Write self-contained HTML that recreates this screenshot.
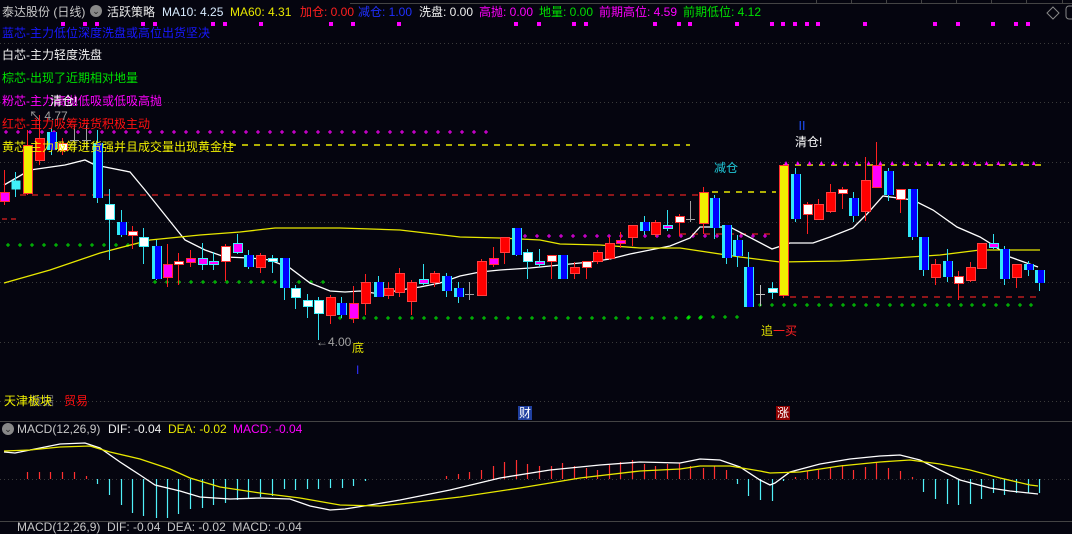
<!DOCTYPE html>
<html><head><meta charset="utf-8">
<style>
html,body{margin:0;padding:0;background:#05050f;}
body{width:1072px;height:527px;overflow:hidden;position:relative;font-family:"Liberation Sans","Noto Sans CJK SC",sans-serif;font-size:12px;}
.t{position:absolute;white-space:nowrap;line-height:14px;}
svg{position:absolute;left:0;top:0;}
</style></head><body>
<svg id="s" width="1072" height="527" xmlns="http://www.w3.org/2000/svg"></svg>

<div class="t" style="left:2px;top:5px;color:#c8c8c8">泰达股份 (日线)</div>
<div class="t" style="left:90px;top:5px;width:12px;height:12px;border-radius:6px;background:#888;color:#222;font-size:9px;text-align:center;line-height:12px">⌄</div>
<div class="t" style="left:107px;top:5px;color:#e8e8e8">活跃策略</div>
<div class="t" style="left:162px;top:5px;color:#d8ecff">MA10: 4.25</div>
<div class="t" style="left:230px;top:5px;color:#e8e800">MA60: 4.31</div>
<div class="t" style="left:300px;top:5px;color:#ff2020">加仓: 0.00</div>
<div class="t" style="left:358px;top:5px;color:#2030ff">减仓: 1.00</div>
<div class="t" style="left:419px;top:5px;color:#f0f0f0">洗盘: 0.00</div>
<div class="t" style="left:479px;top:5px;color:#ff00ff">高抛: 0.00</div>
<div class="t" style="left:539px;top:5px;color:#00e000">地量: 0.00</div>
<div class="t" style="left:599px;top:5px;color:#ff00ff">前期高位: 4.59</div>
<div class="t" style="left:683px;top:5px;color:#00e000">前期低位: 4.12</div>

<div class="t" style="left:2px;top:26px;color:#1818ff">蓝芯-主力低位深度洗盘或高位出货坚决</div>
<div class="t" style="left:2px;top:48px;color:#f0f0f0">白芯-主力轻度洗盘</div>
<div class="t" style="left:2px;top:71px;color:#00e000">棕芯-出现了近期相对地量</div>
<div class="t" style="left:2px;top:94px;color:#ff00ff">粉芯-主力高抛低吸或低吸高抛</div>
<div class="t" style="left:50px;top:94px;color:#ffffff">清仓!</div>
<div class="t" style="left:2px;top:117px;color:#ff1010">红芯-主力吸筹进货积极主动</div>
<div class="t" style="left:2px;top:140px;color:#f0f000">黄芯-主力吸筹进货强并且成交量出现黄金柱</div>

<div class="t" style="left:29px;top:109px;color:#a0a0a0">↖ 4.77</div>
<div class="t" style="left:316px;top:335px;color:#a0a0a0">←4.00</div>
<div class="t" style="left:352px;top:341px;color:#e0e000">底</div>
<div class="t" style="left:356px;top:363px;color:#3030ff">I</div>
<div class="t" style="left:714px;top:161px;color:#20c8d8">减仓</div>
<div class="t" style="left:796px;top:119px;color:#2050ff">Ⅱ</div>
<div class="t" style="left:795px;top:135px;color:#ffffff">清仓!</div>
<div class="t" style="left:761px;top:324px;color:#e0e000">追</div>
<div class="t" style="left:773px;top:324px;color:#ff2020">一买</div>

<div class="t" style="left:30px;top:394px;color:#707070">数据</div>
<div class="t" style="left:4px;top:394px;color:#f0f000">天津板块</div>
<div class="t" style="left:64px;top:394px;color:#ff1010">贸易</div>
<div class="t" style="left:518px;top:406px;width:14px;height:14px;background:#2040a0;color:#fff;text-align:center">财</div>
<div class="t" style="left:776px;top:406px;width:14px;height:14px;background:#900000;color:#fff;text-align:center">涨</div>

<div class="t" style="left:2px;top:423px;width:12px;height:12px;border-radius:6px;background:#888;color:#222;font-size:9px;text-align:center;line-height:12px">⌄</div>
<div class="t" style="left:17px;top:422px;color:#c8c8c8">MACD(12,26,9)</div>
<div class="t" style="left:108px;top:422px;color:#f0f0f0">DIF: -0.04</div>
<div class="t" style="left:168px;top:422px;color:#e8e800">DEA: -0.02</div>
<div class="t" style="left:233px;top:422px;color:#ff00ff">MACD: -0.04</div>
<div class="t" style="left:17px;top:520px;color:#c8c8c8">MACD(12,26,9)&nbsp; DIF: -0.04&nbsp; DEA: -0.02&nbsp; MACD: -0.04</div>

<script>
var s=document.getElementById('s'),h='';
function L(x1,y1,x2,y2,c,w,d){h+='<line x1="'+x1+'" y1="'+y1+'" x2="'+x2+'" y2="'+y2+'" stroke="'+c+'" stroke-width="'+(w||1)+'"'+(d?' stroke-dasharray="'+d+'"':'')+'/>';}
function R(x,y,w,hh,f,st){h+='<rect x="'+x+'" y="'+y+'" width="'+w+'" height="'+hh+'" fill="'+f+'"'+(st?' stroke="'+st+'" stroke-width="1"':'')+'/>';}
function P(pts,c){h+='<polyline fill="none" stroke="'+c+'" stroke-width="1.3" points="'+pts.map(function(p){return p.join(',')}).join(' ')+'"/>';}
// grid
[43,102,162,222,282,342,401,479].forEach(function(y){L(0,y+.5,1072,y+.5,'#3a3a3a',1,'1 3');});
L(350,3.5,1072,3.5,'#444');
[816,851,886,921,956,991,1026,1062].forEach(function(x){L(x+.5,0,x+.5,3,'#444');});
L(0,421.5,1072,421.5,'#444');L(0,521.5,1072,521.5,'#444');
h+='<path d="M1053 7 L1059 13 L1053 19 L1047 13Z" fill="none" stroke="#888"/><rect x="1066" y="6" width="10" height="13" rx="3" fill="none" stroke="#888"/>';
// magenta squares
[62,84,96,142,154,212,224,260,330,352,398,515,538,573,585,654,678,689,736,771,782,794,806,817,864,934,957,992,1015,1027].forEach(function(x){R(x-1,22,4,4,'#ff00ff');});
// dashed lines
L(230,145,690,145,'#e8e800',1.5,'6 6');
L(712,192,776,192,'#e8e800',1.5,'6 6');
L(783,165,1042,165,'#e8e800',1.5,'6 6');
L(20,195,700,195,'#e02020',1.2,'6 6');
L(2,219,20,219,'#e02020',1.2,'5 4');
L(680,234,776,234,'#e02020',1.2,'6 6');
L(790,297,1042,297,'#e02020',1.2,'6 6');
function plus(x,y,c){L(x-2,y,x+2,y,c);L(x,y-2,x,y+2,c);}
for(var x=6;x<=495;x+=12)plus(x,132,'#ff00ff');
for(var x=525;x<=776;x+=12)plus(x,236,'#ff00ff');
for(var x=8;x<=140;x+=12)plus(x,245,'#00e000');
for(var x=155;x<=330;x+=12)plus(x,282,'#00e000');
for(var x=340;x<=700;x+=12)plus(x,318,'#00e000');
for(var x=689;x<=740;x+=12)plus(x,317,'#00e000');
for(var x=760;x<=1040;x+=11.8)plus(Math.round(x),305,'#00e000');
for(var x=786;x<=1040;x+=11.8)h+='<path d="M'+(x-2)+' 165 L'+x+' 161 L'+(x+2)+' 165Z" fill="#ff00ff"/>';
// MA lines
P([[4,185],[30,170],[65,165],[85,160],[95,165],[130,172],[145,190],[165,215],[185,240],[205,250],[225,257],[250,258],[270,260],[290,268],[310,283],[330,291],[345,292],[360,291],[380,294],[400,290],[420,287],[440,283],[460,276],[480,272],[500,270],[530,268],[550,266],[570,264],[590,262],[610,259],[630,254],[650,250],[670,246],[690,238],[700,227],[730,227],[772,249],[790,243],[813,243],[830,237],[853,228],[867,214],[883,196],[913,200],[933,210],[957,227],[980,237],[993,245],[1010,257],[1038,267]],'#ffffff');
P([[4,283],[50,270],[100,253],[150,240],[200,235],[240,232],[275,228],[340,228],[400,230],[460,237],[500,238],[540,240],[560,244],[600,245],[640,248],[680,248],[740,257],[780,262],[840,261],[880,259],[940,255],[980,250],[1040,250]],'#e8e800');
// candles [x,top,bot,hi,lo,type]
var C=[[4,192,201,170,205,'m'],[15,180,189,172,197,'c'],[27,145,193,130,195,'y'],[39,138,160,115,165,'r'],[51,132,150,128,155,'b'],[62,143,150,138,155,'w'],[74,140,141,125,150,'x'],[86,140,141,125,150,'x'],[97,143,198,130,203,'b'],[109,204,219,189,260,'cw'],[121,222,235,210,237,'b'],[132,231,235,226,249,'w'],[143,237,246,228,264,'cw'],[156,246,279,240,280,'b'],[167,264,277,244,287,'m'],[178,261,264,253,285,'w'],[190,258,262,250,267,'m'],[202,258,264,243,270,'mc'],[213,261,264,252,270,'mc'],[225,246,261,244,281,'w'],[237,243,252,234,254,'mc'],[248,255,267,250,269,'b'],[260,255,267,253,273,'r'],[272,258,261,255,273,'cw'],[284,258,288,258,300,'b'],[295,288,297,285,309,'cw'],[307,300,306,294,318,'cw'],[318,300,313,297,340,'cw'],[330,297,315,295,324,'r'],[341,303,315,297,318,'b'],[353,303,318,286,323,'m'],[365,282,303,274,315,'r'],[378,282,297,276,297,'b'],[388,288,295,282,299,'r'],[399,273,292,268,297,'r'],[411,282,301,280,315,'r'],[423,279,283,264,285,'mc'],[434,273,282,271,287,'r'],[446,276,291,273,297,'b'],[458,288,297,282,303,'b'],[469,294,295,282,300,'x'],[481,261,295,259,295,'r'],[493,258,264,247,267,'m'],[504,237,252,237,264,'r'],[516,228,255,228,256,'b'],[527,252,261,249,279,'cw'],[539,261,264,249,267,'mc'],[551,255,261,255,279,'w'],[562,255,279,255,279,'b'],[574,267,273,262,279,'r'],[586,261,267,261,279,'w'],[597,252,261,250,264,'r'],[609,243,258,237,260,'r'],[620,240,243,232,248,'m'],[632,225,237,225,246,'r'],[644,222,231,216,235,'b'],[655,222,234,220,237,'r'],[667,225,228,210,231,'mc'],[679,216,222,214,236,'w'],[690,219,220,201,222,'x'],
[703,192,223,187,234,'y'],[714,198,228,195,239,'b'],[726,225,258,225,264,'b'],[737,240,256,235,267,'b'],[748,267,307,252,307,'b'],[760,294,295,285,306,'xw'],[772,288,292,282,299,'cw'],[783,165,295,165,298,'y'],[795,174,219,168,222,'b'],[807,204,214,202,234,'w'],[818,204,219,199,219,'r'],[830,192,211,184,213,'r'],[842,189,193,187,209,'w'],[853,198,216,192,222,'b'],[865,180,211,157,221,'r'],[876,165,187,142,187,'m'],[888,171,195,168,201,'b'],[900,189,199,189,213,'w'],[912,189,237,189,240,'b'],[923,237,270,237,276,'b'],[935,264,277,259,285,'r'],[947,261,277,249,282,'b'],[958,276,283,271,300,'w'],[970,267,280,262,282,'r'],[981,243,268,243,268,'r'],[993,243,247,234,249,'mc'],[1004,249,279,246,285,'b'],[1016,264,277,264,288,'r'],[1028,264,270,261,276,'b'],[1039,270,283,270,291,'b']];
C.forEach(function(c){var x=c[0],t=c[1],b=c[2],hi=c[3],lo=c[4],k=c[5];
 var wc={r:'#ff2020',m:'#ff2020',w:'#ff2020',y:'#ff2020',b:'#30e0f0',c:'#30e0f0',cw:'#30e0f0',mc:'#30e0f0',x:'#a0a0a0',xw:'#c0c0c0'}[k];
 L(x+.5,hi,x+.5,lo,wc);
 if(k=='x'||k=='xw'){L(x-4,t+.5,x+5,t+.5,wc);return;}
 var hh=Math.max(b-t,3);
 if(k=='b'){R(x-4,t,10,hh,'#0000ff');R(x-4,t,3,hh,'#30e8f8');R(x+5,t,1,hh,'#30e8f8');}
 else if(k=='c')R(x-3.5,t+.5,9,hh,'#40f0f8');
 else if(k=='r')R(x-3.5,t+.5,9,hh,'#ff0000','#ff4040');
 else if(k=='y')R(x-3.5,t+.5,9,hh,'#f0f000','#ff3030');
 else if(k=='m')R(x-3.5,t+.5,9,hh,'#ff00ff','#ff3030');
 else if(k=='mc')R(x-3.5,t+.5,9,hh,'#ff00ff','#40f0f8');
 else if(k=='w')R(x-3.5,t+.5,9,hh,'#ffffff','#ff3030');
 else if(k=='cw')R(x-3.5,t+.5,9,hh,'#ffffff','#40f0f8');
});
// MACD bars
var B=[[27,472],[39,472],[50,472],[62,472],[74,472],[86,476],[97,484],[109,495],[121,505],[132,513],[143,516],[156,518],[167,518],[178,514],[190,509],[202,508],[213,505],[225,503],[237,500],[248,498],[260,497],[272,496],[284,489],[295,490],[307,489],[318,489],[330,488],[342,488],[353,486],[365,481],[446,476],[458,474],[469,472],[481,470],[493,466],[504,462],[516,460],[527,464],[539,466],[551,466],[562,463],[574,466],[586,468],[597,470],[609,465],[620,462],[632,460],[644,464],[655,466],[667,464],[679,463],[690,466],[703,468],[714,466],[726,470],[737,484],[748,496],[760,500],[772,501],[783,481],[795,477],[807,471],[818,470],[830,467],[842,465],[853,470],[865,467],[876,463],[888,468],[900,471],[912,477],[923,492],[935,499],[947,504],[958,505],[970,504],[981,499],[993,493],[1004,495],[1016,493],[1028,493],[1039,493]];
B.forEach(function(b){var up=b[1]<479;L(b[0]+.5,479,b[0]+.5,b[1],up?'#ff3030':'#50f0f8',1.2);});
P([[4,452],[15,453],[30,450],[60,444],[85,443],[100,448],[120,462],[140,475],[155,485],[180,491],[200,497],[230,499],[260,498],[290,499],[310,506],[330,510],[345,509],[370,505],[400,500],[450,490],[500,478],[550,470],[600,465],[640,462],[680,463],[700,459],[720,460],[740,467],[760,480],[770,485],[775,483],[790,472],[820,464],[850,459],[880,456],[900,455],[920,460],[940,470],[960,480],[990,488],[1010,491],[1038,494]],'#ffffff');
P([[4,451],[30,450],[60,447],[90,446],[110,452],[140,459],[170,469],[190,478],[220,487],[260,493],[300,498],[340,505],[380,506],[400,504],[460,497],[520,488],[580,478],[640,471],[680,469],[700,466],[730,466],[760,471],[770,473],[800,472],[840,466],[880,462],[910,460],[940,464],[970,470],[1000,478],[1030,485],[1038,486]],'#e8e800');
s.innerHTML=h;
</script>
</body></html>
